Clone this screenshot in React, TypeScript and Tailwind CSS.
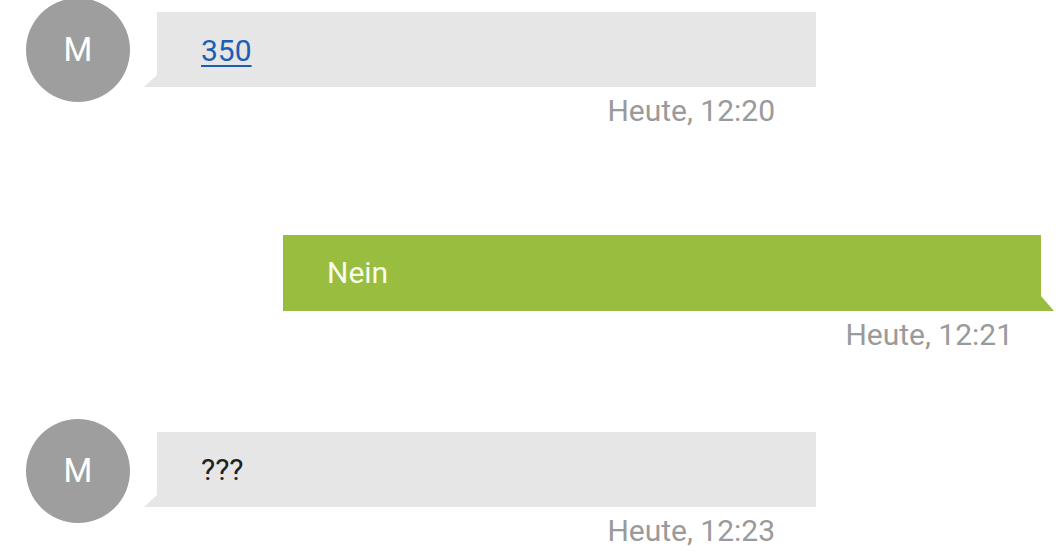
import React from "react";

const font = { fontFamily: "Roboto, 'Noto Sans', sans-serif" };

function Avatar() {
  return (
    <div className="w-[104px] h-[104px] shrink-0 rounded-full bg-[#9e9e9e] flex items-center justify-center text-[33px] leading-[36px] text-white">
      M
    </div>
  );
}

function Stamp({ children, pr }: { children: React.ReactNode; pr: string }) {
  return (
    <div className={`mt-[6px] text-right text-[30px] leading-[36px] text-[#9a9a9a] ${pr}`}>
      {children}
    </div>
  );
}

export default function App() {
  return (
    <div className="w-[1060px] h-[557px] overflow-hidden bg-white" style={font}>
      {/* Message 1 */}
      <div className="flex items-start pl-[26px]">
        <div className="-mt-[2px]">
          <Avatar />
        </div>
        <div className="ml-[27px] pt-[12px] w-[659px]">
          <div className="relative h-[75px] bg-[#e6e6e6] flex items-center pl-[44px] pt-[2px]">
            <svg className="absolute left-[-13px] bottom-0" width="13" height="12" viewBox="0 0 13 12">
              <polygon points="13,0 13,12 0,12" fill="#e6e6e6" />
            </svg>
            <a href="#" className="text-[30px] leading-[36px] text-[#1a5fb4] underline underline-offset-[4px] decoration-[2px]">
              350
            </a>
          </div>
          <Stamp pr="pr-[41px]">Heute, 12:20</Stamp>
        </div>
      </div>

      {/* Message 2 */}
      <div className="mt-[106px] flex flex-col items-end pr-[19px]">
        <div className="w-[758px]">
          <div className="relative h-[76px] bg-[#99bd3e] flex items-center pl-[44px]">
            <svg className="absolute right-[-13px] bottom-0" width="13" height="15" viewBox="0 0 13 15">
              <polygon points="0,0 13,15 0,15" fill="#99bd3e" />
            </svg>
            <span className="text-[30px] leading-[36px] text-[#f8fcee]">Nein</span>
          </div>
          <Stamp pr="pr-[28px]">Heute, 12:21</Stamp>
        </div>
      </div>

      {/* Message 3 */}
      <div className="mt-[66px] flex items-start pl-[26px]">
        <Avatar />
        <div className="ml-[27px] pt-[13px] w-[659px]">
          <div className="relative h-[75px] bg-[#e6e6e6] flex items-center pl-[44px]">
            <svg className="absolute left-[-13px] bottom-0" width="13" height="12" viewBox="0 0 13 12">
              <polygon points="13,0 13,12 0,12" fill="#e6e6e6" />
            </svg>
            <span className="text-[30px] leading-[36px] text-[#212121]">???</span>
          </div>
          <Stamp pr="pr-[41px]">Heute, 12:23</Stamp>
        </div>
      </div>
    </div>
  );
}
